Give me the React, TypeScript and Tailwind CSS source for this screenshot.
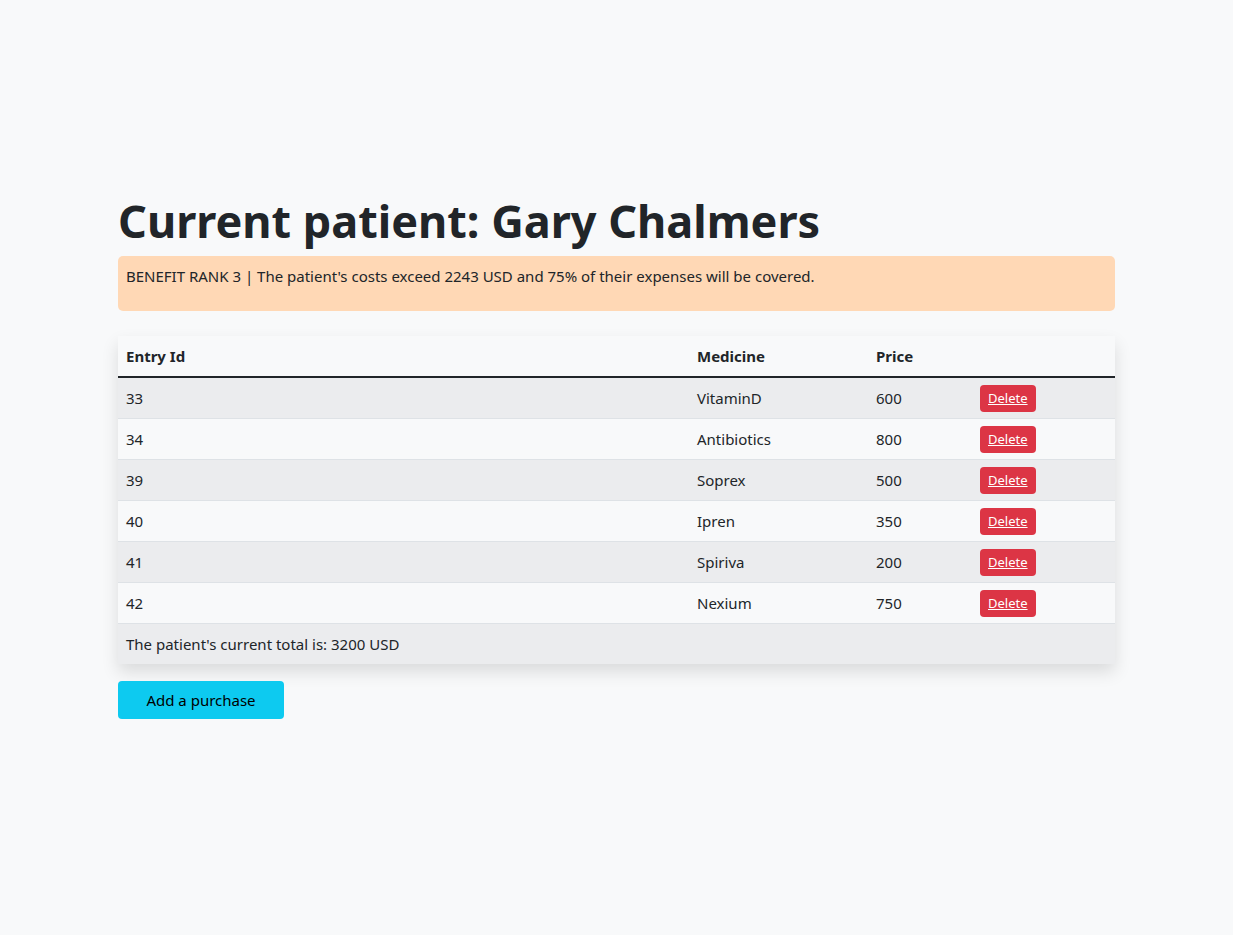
const rows = [
  { id: 33, medicine: "VitaminD", price: 600 },
  { id: 34, medicine: "Antibiotics", price: 800 },
  { id: 39, medicine: "Soprex", price: 500 },
  { id: 40, medicine: "Ipren", price: 350 },
  { id: 41, medicine: "Spiriva", price: 200 },
  { id: 42, medicine: "Nexium", price: 750 },
];

const App = () => {
  const total = rows.reduce((sum, r) => sum + r.price, 0);

  return (
    <div className="min-h-[935px] bg-[#f8f9fa] text-[#212529] font-['Noto_Sans',sans-serif] pt-[195px]">
      <div className="w-[997px] mx-auto">
        <h1 className="text-[45px] leading-[52px] font-bold mb-[9px]">Current patient: Gary Chalmers</h1>

        <div className="bg-[#ffd8b5] rounded-[5px] px-2 pt-2 text-[15px] leading-6 h-[55px]">
          BENEFIT RANK 3 | The patient's costs exceed 2243 USD and 75% of their expenses will be covered.
        </div>

        <div className="mt-[25px] shadow-[0_8px_16px_rgba(0,0,0,0.12)]">
          <table className="w-full table-fixed border-collapse text-[15px] leading-6">
            <colgroup>
              <col className="w-[571px]" />
              <col className="w-[179px]" />
              <col className="w-[104px]" />
              <col />
            </colgroup>
            <thead>
              <tr className="bg-[#f8f9fa] border-b-2 border-[#212529]">
                <th className="text-left font-bold px-2 py-2 h-[41px]">Entry Id</th>
                <th className="text-left font-bold px-2 py-2">Medicine</th>
                <th className="text-left font-bold px-2 py-2">Price</th>
                <th className="px-2 py-2"></th>
              </tr>
            </thead>
            <tbody>
              {rows.map((r, i) => (
                <tr
                  key={r.id}
                  className={`${i % 2 === 0 ? "bg-[#ebecee]" : "bg-[#f8f9fa]"} border-b border-[#dee2e6]`}
                >
                  <td className="px-2 h-[41px]">{r.id}</td>
                  <td className="px-2">{r.medicine}</td>
                  <td className="px-2">{r.price}</td>
                  <td className="px-2 pt-[1px]">
                    <button className="flex items-center h-[27px] bg-[#dc3545] text-white text-[13px] leading-[19px] px-2 rounded-[4px] underline">
                      Delete
                    </button>
                  </td>
                </tr>
              ))}
              <tr className="bg-[#ebecee]">
                <td colSpan={4} className="px-2 h-[41px]">
                  The patient's current total is: {total} USD
                </td>
              </tr>
            </tbody>
          </table>
        </div>

        <button className="mt-[17px] bg-[#0dcaf0] text-black text-[15px] leading-6 w-[166px] h-[38px] rounded-[4px]">
          Add a purchase
        </button>
      </div>
    </div>
  );
};

export default App;
